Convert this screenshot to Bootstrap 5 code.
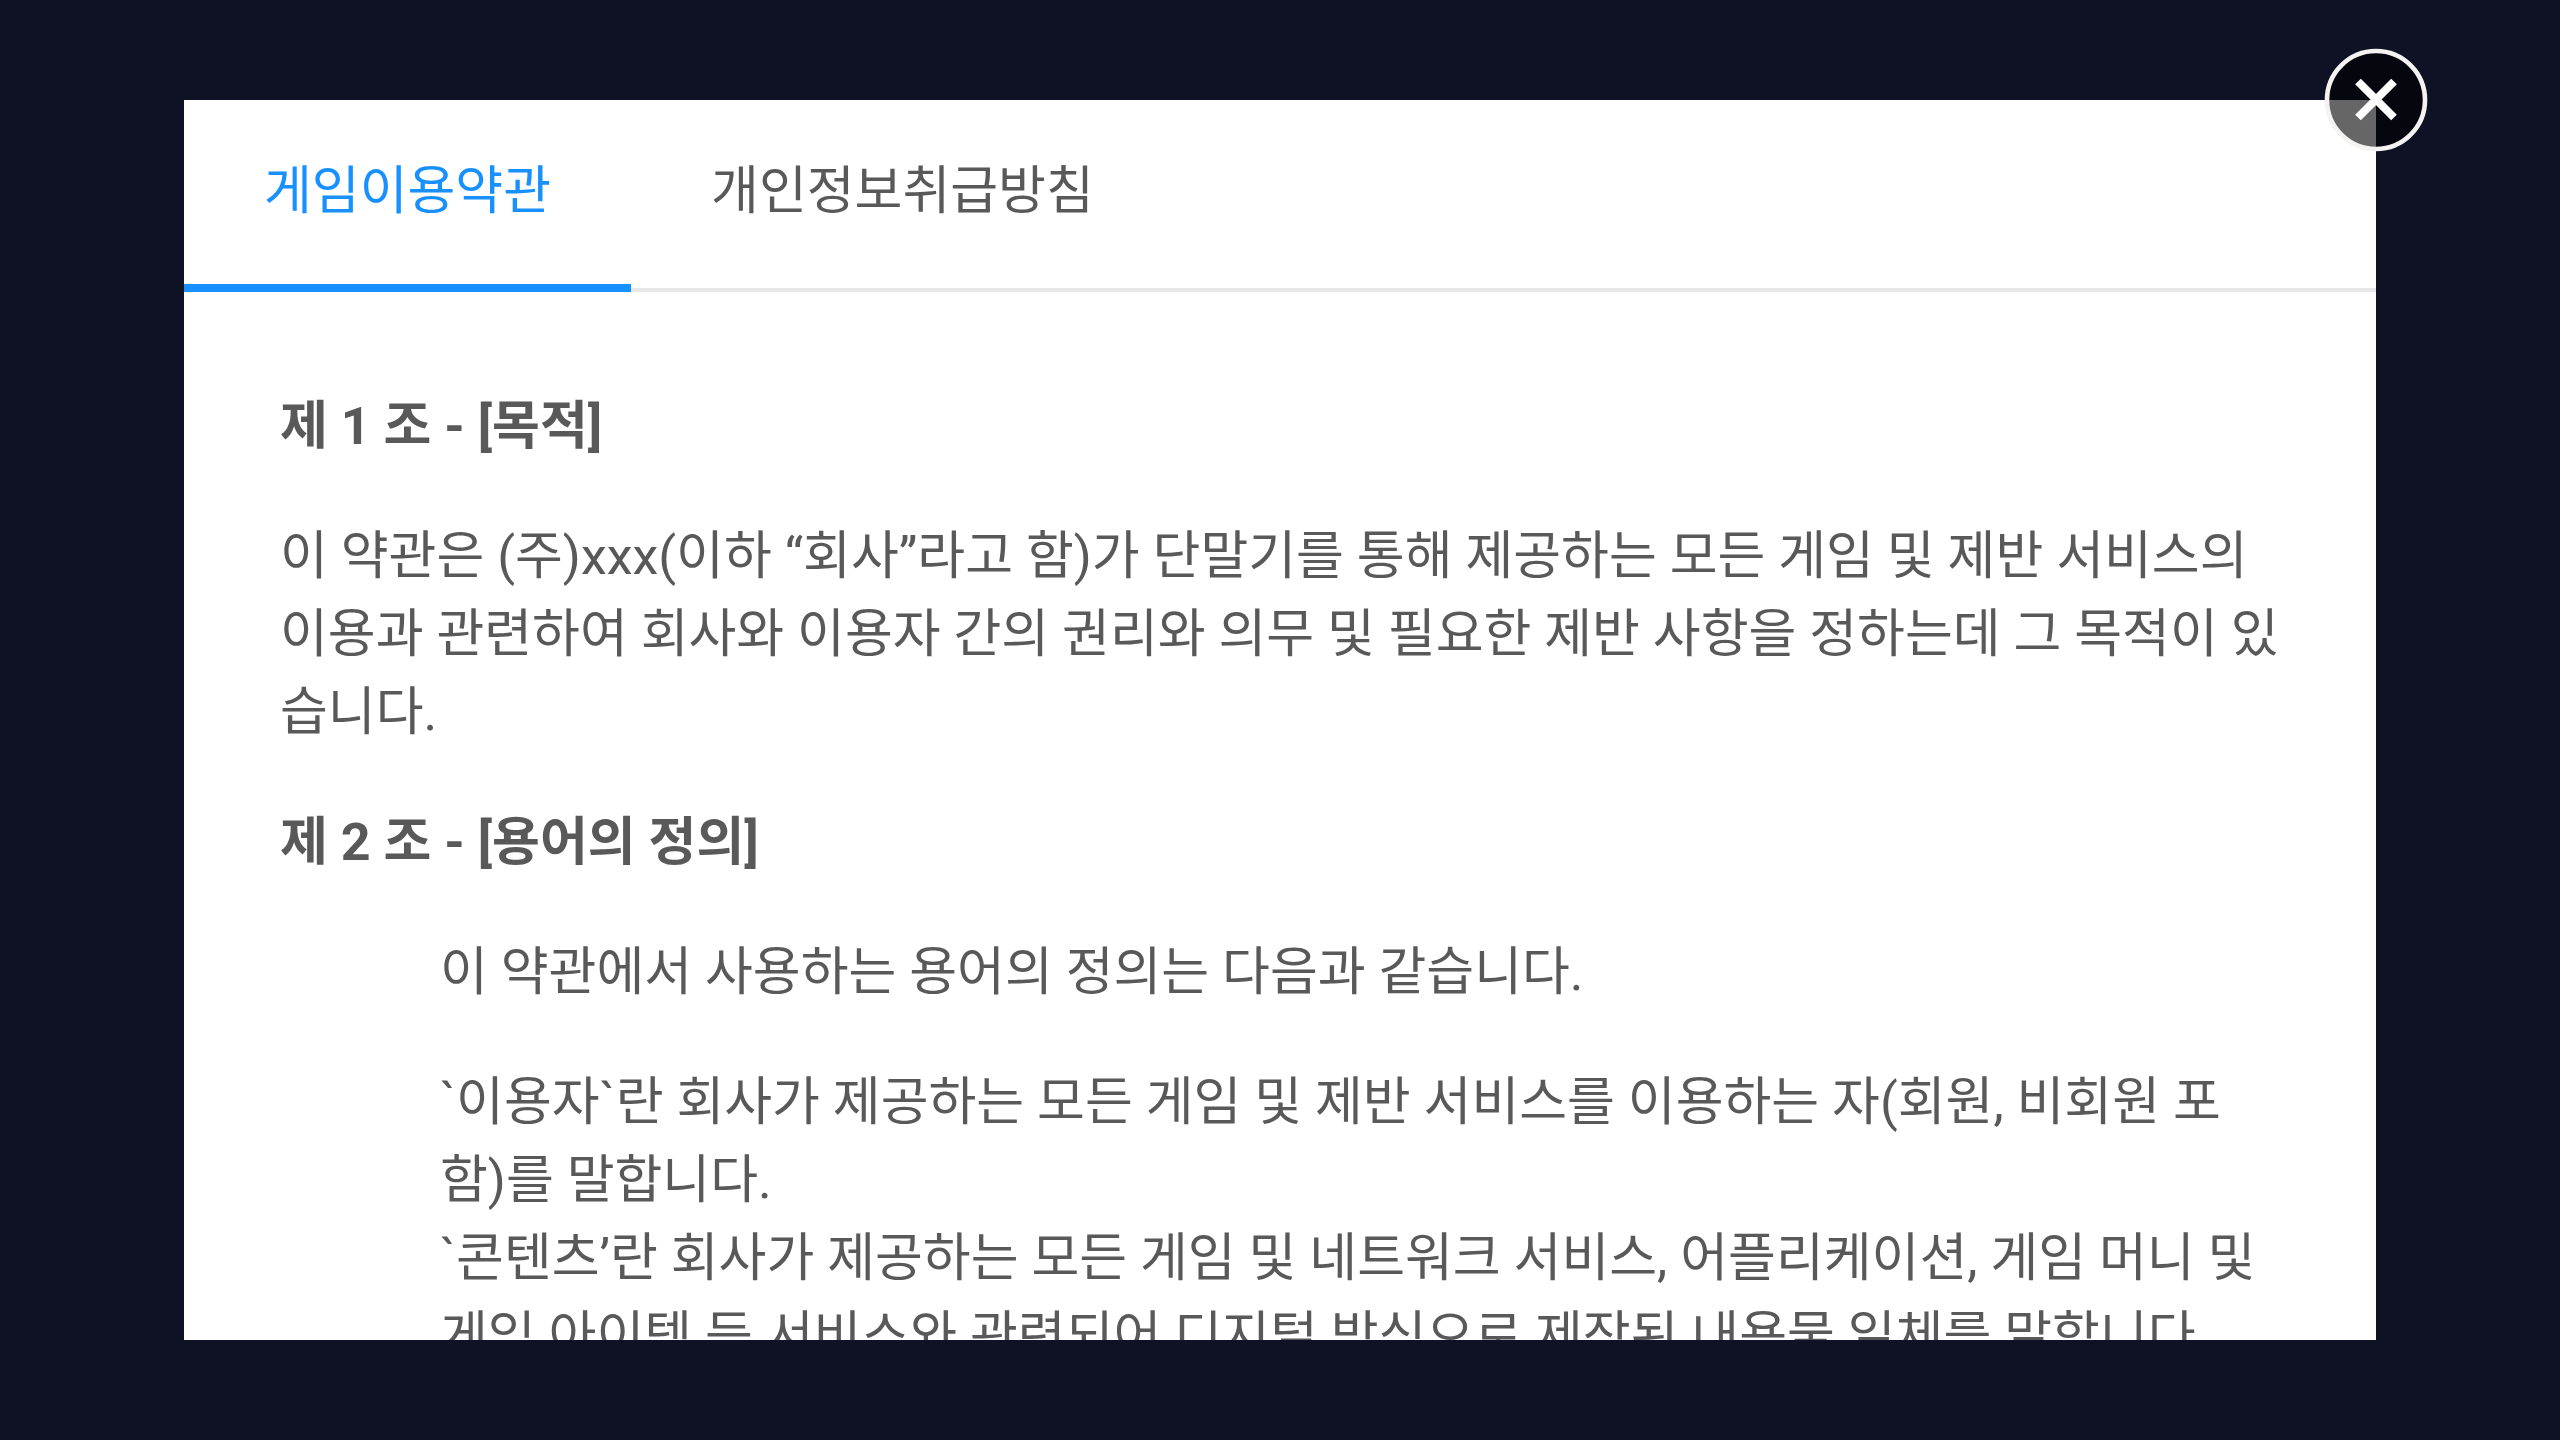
<!DOCTYPE html>
<html lang="ko">
<head>
<meta charset="utf-8">
<meta name="viewport" content="width=device-width, initial-scale=1">
<title>게임이용약관</title>
<link href="https://cdn.jsdelivr.net/npm/bootstrap@5.3.0/dist/css/bootstrap.min.css" rel="stylesheet">
<style>
  body { background: #0f1124; color: #595959; font-family: Roboto, "Noto Sans CJK KR", sans-serif; font-size: 52px; line-height: 1.5; }
  .terms-stage { padding: 100px 184px; }
  .terms-panel { border-radius: 0; }
  .terms-tabs { --bs-nav-tabs-border-width: 0; height: 192px; box-shadow: inset 0 -4px #e8e8e8; }
  .terms-tabs .nav-link { color: #595959; padding: 53px 80px 0; border: 0; border-radius: 0; background: none; }
  .terms-tabs .nav-link.active { color: #1890ff; background: none; box-shadow: inset 0 -8px #1890ff; }
  .terms-body { padding: 96px 96px 0; word-break: normal; }
  .terms-body p { margin-bottom: 52px; }
  .terms-list { padding-left: 160px; }
  .terms-close { width: 104px; height: 104px; }
</style>
<script src="https://cdn.jsdelivr.net/npm/bootstrap@5.3.0/dist/js/bootstrap.bundle.min.js"></script>
</head>
<body class="overflow-hidden">
<main class="terms-stage vh-100">
  <section class="terms-panel position-relative bg-white h-100 d-flex flex-column">
    <nav class="terms-tabs nav nav-tabs flex-shrink-0 flex-nowrap">
      <a class="nav-link active" href="#">게임이용약관</a>
      <a class="nav-link" href="#">개인정보취급방침</a>
    </nav>
    <div class="terms-body flex-grow-1 overflow-hidden">
      <p class="fw-bold">제 1 조 - [목적]</p>
      <p>이 약관은 (주)xxx(이하 “회사”라고 함)가 단말기를 통해 제공하는 모든 게임 및 제반 서비스의 이용과 관련하여 회사와 이용자 간의 권리와 의무 및 필요한 제반 사항을 정하는데 그 목적이 있습니다.</p>
      <p class="fw-bold">제 2 조 - [용어의 정의]</p>
      <div class="terms-list">
        <p>이 약관에서 사용하는 용어의 정의는 다음과 같습니다.</p>
        <div>`이용자`란 회사가 제공하는 모든 게임 및 제반 서비스를 이용하는 자(회원, 비회원 포함)를 말합니다.</div>
        <div>`콘텐츠’란 회사가 제공하는 모든 게임 및 네트워크 서비스, 어플리케이션, 게임 머니 및 게임 아이템 등 서비스와 관련되어 디지털 방식으로 제작된 내용물 일체를 말합니다.</div>
      </div>
    </div>
    <button type="button" class="terms-close btn p-0 border-0 d-flex position-absolute top-0 start-100 translate-middle" aria-label="닫기">
      <svg width="104" height="104" viewBox="-52 -52 104 104" fill="none">
        <circle r="49" fill="#000" fill-opacity=".6"/>
        <circle r="49" stroke="#f5f3f1" stroke-width="4.6"/>
        <path d="M-18-18.5 18 17.5M18-18.5-18 17.5" stroke="#fff" stroke-width="8"/>
      </svg>
    </button>
  </section>
</main>
</body>
</html>
